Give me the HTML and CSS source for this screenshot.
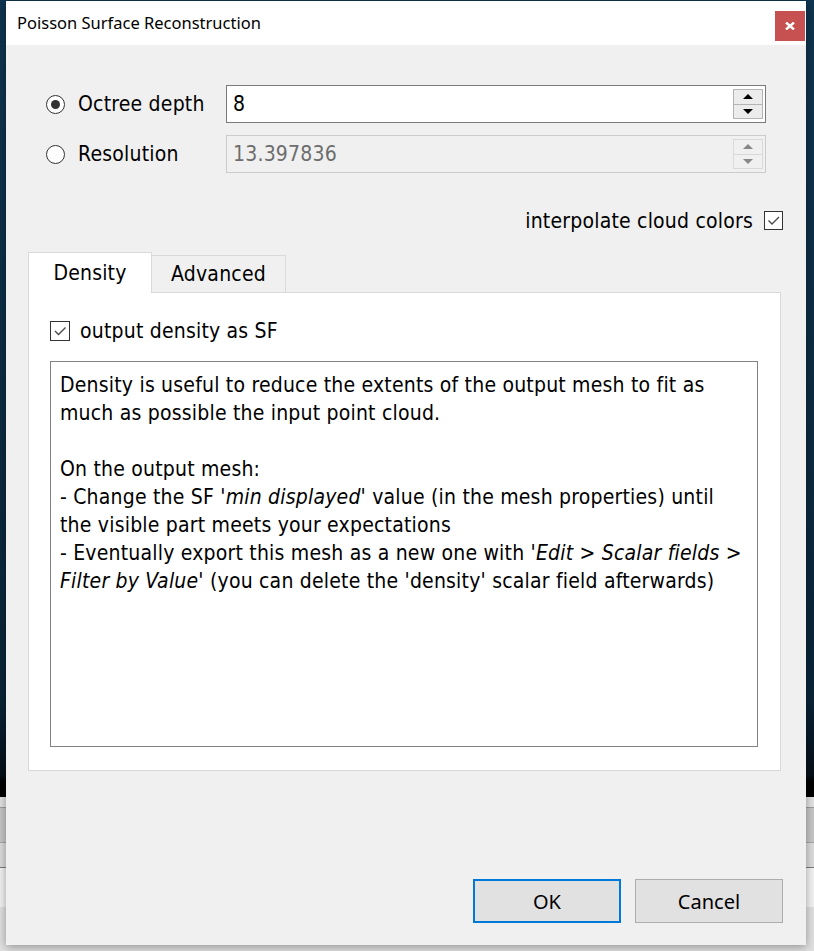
FILE: index.html
```html
<!DOCTYPE html>
<html>
<head>
<meta charset="utf-8">
<link rel="stylesheet" href="styles.css">
</head>
<body>
<div class="dialog">
  <div class="titlebar">
    <span class="title">Poisson Surface Reconstruction</span>
    <div class="close">
      <svg width="10" height="8" viewBox="0 0 10 8"><path d="M1 0.5 L9 7.5 M9 0.5 L1 7.5" stroke="#fff" stroke-width="2.4" fill="none"/></svg>
    </div>
  </div>
  <div class="content">
    <div class="modes">
      <div class="opt"><span class="radio on"></span><span>Octree depth</span></div>
      <div class="spin">
        <span class="val">8</span>
        <div class="btns"><div class="sb"><span class="up"></span></div><div class="sb"><span class="down"></span></div></div>
      </div>
      <div class="opt"><span class="radio"></span><span>Resolution</span></div>
      <div class="spin disabled">
        <span class="val">13.397836</span>
        <div class="btns"><div class="sb"><span class="up"></span></div><div class="sb"><span class="down"></span></div></div>
      </div>
    </div>
    <div class="interp">
      <span>interpolate cloud colors</span>
      <span class="cb"><svg width="17" height="17" viewBox="0 0 17 17"><path d="M3.5 8.5 L7 12 L14 5" stroke="#4a4a4a" stroke-width="1.4" fill="none"/></svg></span>
    </div>
    <div class="tabs">
      <div class="tabbar">
        <div class="tab active">Density</div>
        <div class="tab">Advanced</div>
      </div>
      <div class="pane">
        <div class="check-row">
          <span class="cb"><svg width="18" height="18" viewBox="0 0 18 18"><path d="M4 9 L7.5 12.5 L14.5 5.5" stroke="#4a4a4a" stroke-width="1.4" fill="none"/></svg></span>
          <span>output density as SF</span>
        </div>
        <div class="textbox">
          <div>Density is useful to reduce the extents of the output mesh to fit as</div>
          <div>much as possible the input point cloud.</div>
          <div>&nbsp;</div>
          <div>On the output mesh:</div>
          <div>- Change the SF '<i>min displayed</i>' value (in the mesh properties) until</div>
          <div>the visible part meets your expectations</div>
          <div>- Eventually export this mesh as a new one with '<i>Edit &gt; Scalar fields &gt;</i></div>
          <div><i>Filter by Value</i>' (you can delete the 'density' scalar field afterwards)</div>
        </div>
      </div>
    </div>
    <div class="buttons">
      <button class="btn default">OK</button>
      <button class="btn">Cancel</button>
    </div>
  </div>
</div>
</body>
</html>
```
FILE: styles.css
```css
* { box-sizing: border-box; }
html, body { margin: 0; padding: 0; }
body {
  width: 814px;
  height: 951px;
  overflow: hidden;
  font-family: "DejaVu Sans", sans-serif;
  font-stretch: condensed;
  font-size: 21px;
  letter-spacing: 0.2px;
  color: #000;
  background: linear-gradient(to bottom,
    #0f3550 0px, #0a2437 700px, #050f18 775px, #000 782px, #000 797px,
    #e2e2e2 797px, #e2e2e2 807px, #9c9c9c 807px, #9c9c9c 808px,
    #c6c6c6 808px, #c6c6c6 842px, #a6a6a6 842px, #a6a6a6 843px,
    #dcdcdc 843px, #dcdcdc 867px, #7a7a7a 867px, #7a7a7a 868px,
    #f2f2f2 868px, #f2f2f2 907px, #e0e0e0 907px, #e0e0e0 951px);
}
.dialog {
  margin: 1px 0 0 6px;
  width: 800px;
  height: 944px;
  background: #f0f0f0;
  box-shadow: 0 2px 9px rgba(0, 0, 0, 0.35);
  display: flex;
  flex-direction: column;
}
.titlebar {
  height: 44px;
  background: #fff;
  display: flex;
  align-items: flex-start;
  justify-content: space-between;
  padding: 0 1px 0 11px;
}
.title {
  font-family: "Noto Sans", sans-serif;
  font-stretch: normal;
  letter-spacing: 0;
  font-size: 16.5px;
  line-height: 44px;
}
.close {
  width: 30px;
  height: 30px;
  margin-top: 10px;
  background: #c75050;
  display: flex;
  align-items: center;
  justify-content: center;
}
.content {
  flex: 1;
  display: flex;
  flex-direction: column;
  padding: 40px 23px 22px 22px;
}
.modes {
  display: grid;
  grid-template-columns: 180px 1fr;
  row-gap: 12px;
  margin: 0 17px 0 18px;
}
.opt {
  display: flex;
  align-items: center;
  gap: 13px;
  height: 38px;
}
.radio {
  width: 19px;
  height: 19px;
  border: 1px solid #333;
  border-radius: 50%;
  background: #fff;
  display: flex;
  align-items: center;
  justify-content: center;
}
.radio.on::after {
  content: "";
  width: 9px;
  height: 9px;
  border-radius: 50%;
  background: #333;
}
.spin {
  height: 38px;
  border: 1px solid #7a7a7a;
  background: #fff;
  display: flex;
  align-items: center;
  padding: 2px 2px 2px 6px;
}
.spin .val { flex: 1; }
.btns {
  width: 30px;
  height: 30px;
  display: flex;
  flex-direction: column;
}
.sb {
  flex: 1;
  border: 1px solid #b4b4b4;
  background: #ececec;
  display: flex;
  align-items: center;
  justify-content: center;
}
.sb + .sb { border-top: none; }
.up, .down {
  width: 0;
  height: 0;
  border-left: 5px solid transparent;
  border-right: 5px solid transparent;
}
.up { border-bottom: 5px solid #000; }
.down { border-top: 5px solid #000; }
.spin.disabled {
  border-color: #cccccc;
  background: #f0f0f0;
  color: #6d6d6d;
}
.spin.disabled .sb { border-color: #d9d9d9; background: #f0f0f0; }
.spin.disabled .up { border-bottom-color: #888; }
.spin.disabled .down { border-top-color: #888; }
.interp {
  display: flex;
  justify-content: flex-end;
  align-items: center;
  gap: 11px;
  margin-top: 38px;
  height: 19px;
}
.cb {
  width: 20px;
  height: 20px;
  border: 1px solid #333;
  background: #fff;
  display: flex;
  align-items: center;
  justify-content: center;
  flex: none;
}
.interp .cb { width: 19px; height: 19px; }
.tabs {
  margin-top: 22px;
  margin-right: 2px;
}
.tabbar {
  display: flex;
  align-items: flex-end;
  height: 40px;
}
.tab {
  width: 134px;
  height: 37px;
  background: #f0f0f0;
  border: 1px solid #d9d9d9;
  border-left: none;
  border-bottom: none;
  display: flex;
  align-items: center;
  justify-content: center;
}
.tab.active {
  width: 124px;
  height: 41px;
  margin-bottom: -1px;
  background: #fff;
  border-left: 1px solid #d9d9d9;
  position: relative;
  z-index: 1;
  padding-bottom: 1px;
}
.pane {
  height: 479px;
  background: #fff;
  border: 1px solid #d9d9d9;
  padding: 28px 22px 23px 21px;
  display: flex;
  flex-direction: column;
}
.check-row {
  display: flex;
  align-items: center;
  gap: 10px;
  height: 20px;
}
.textbox {
  margin-top: 20px;
  flex: 1;
  border: 1px solid #828282;
  padding: 9px 9px;
  line-height: 28px;
  white-space: nowrap;
  overflow: hidden;
}
.buttons {
  margin-top: auto;
  display: flex;
  justify-content: flex-end;
  gap: 14px;
}
.btn {
  width: 148px;
  height: 44px;
  background: #e1e1e1;
  border: 1px solid #adadad;
  font-family: "Noto Sans", sans-serif;
  font-stretch: normal;
  letter-spacing: 0;
  font-size: 20px;
  color: #000;
  padding: 0;
}
.btn.default { border: 2px solid #0078d7; }
```
